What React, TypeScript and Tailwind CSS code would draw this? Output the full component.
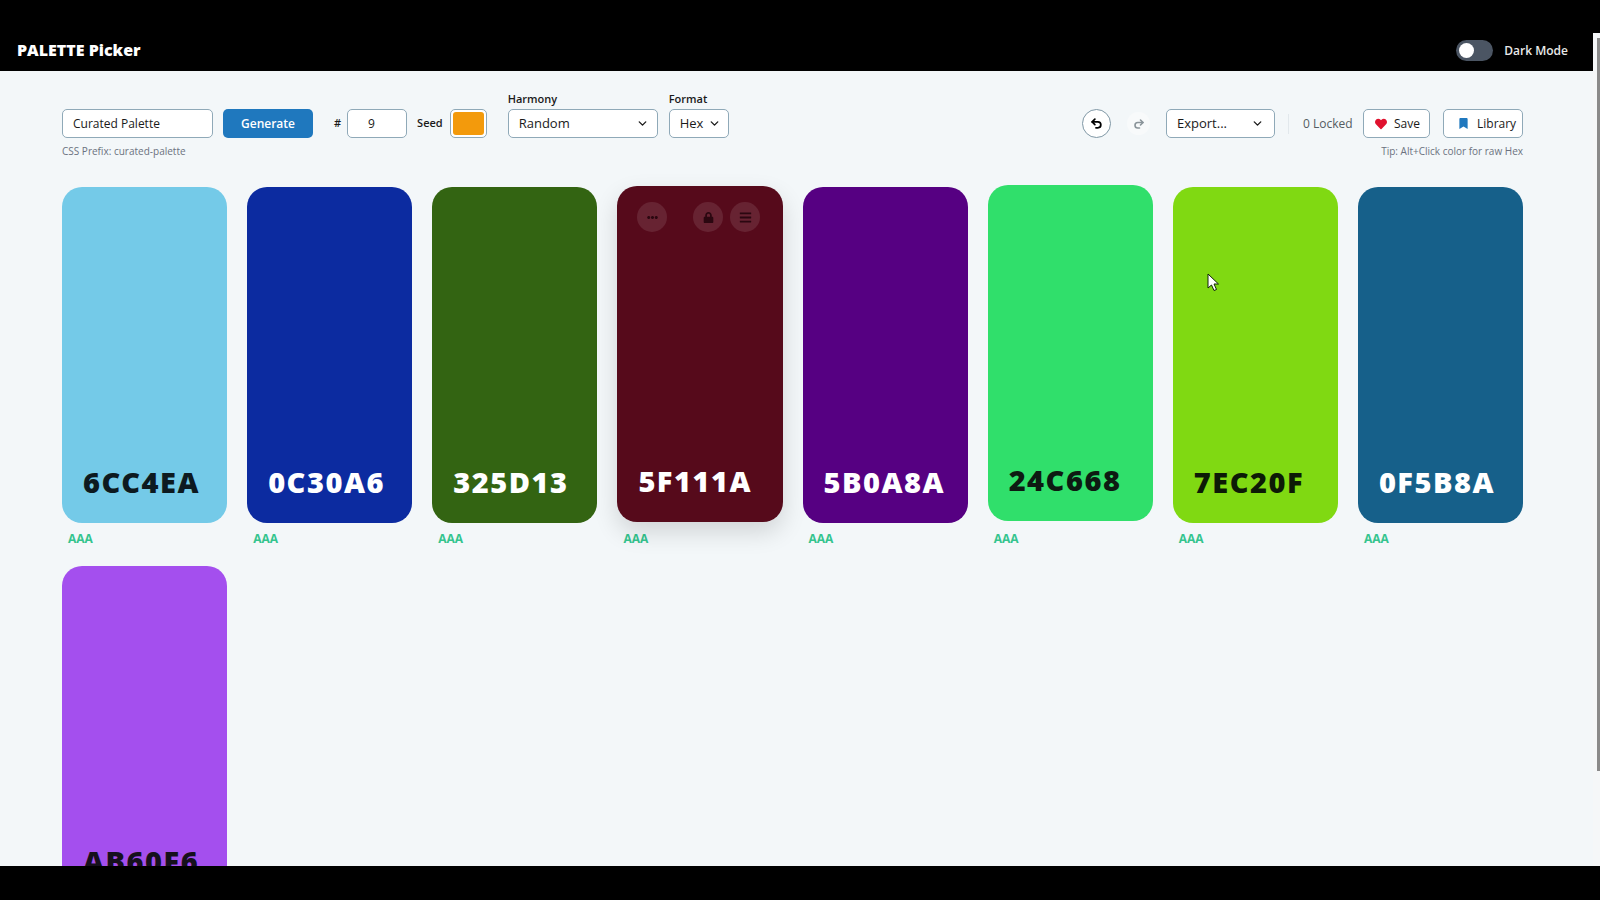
import { ChevronDown, Undo2, Redo2 } from 'lucide-react';
import { FaHeart, FaBookmark, FaLock, FaBars, FaEllipsisH } from 'react-icons/fa';

const swatches = [
  { hex: '6CC4EA', bg: 'bg-[#74cae8]', text: 'text-[#0d1a20]', shift: '' },
  { hex: '0C30A6', bg: 'bg-[#0c2ba0]', text: 'text-white', shift: '' },
  { hex: '325D13', bg: 'bg-[#336412]', text: 'text-white', shift: '' },
  { hex: '5F111A', bg: 'bg-[#560a1b]', text: 'text-white', shift: '-translate-y-px shadow-[0_10px_24px_rgba(0,0,0,0.14)]', hover: true },
  { hex: '5B0A8A', bg: 'bg-[#560082]', text: 'text-white', shift: '' },
  { hex: '24C668', bg: 'bg-[#30df6b]', text: 'text-[#0d1a12]', shift: '-translate-y-[2px]' },
  { hex: '7EC20F', bg: 'bg-[#80d912]', text: 'text-[#0d1a06]', shift: '' },
  { hex: '0F5B8A', bg: 'bg-[#16608a]', text: 'text-white', shift: '' },
  { hex: 'AB60F6', bg: 'bg-[#a44fee]', text: 'text-[#16101c]', shift: '' },
];

const fieldBorder = 'border border-[#8fa9b8] rounded-[5px] bg-white';

function Select({ label, width, padRight }: { label: string; width: string; padRight: string }) {
  return (
    <div className={`${width} ${padRight} ${fieldBorder} h-[29px] pl-[10px] flex items-center justify-between text-[13px] text-[#1a1a1a]`}>
      <span>{label}</span>
      <ChevronDown size={13} strokeWidth={2.5} />
    </div>
  );
}

function Swatch({ s }: { s: (typeof swatches)[number] }) {
  return (
    <div>
      <div className={`${s.bg} ${s.text} ${s.shift} relative h-[336px] rounded-[20px] flex items-end pl-[21px] pb-[27px]`}>
        {s.hover && (
          <>
            <div className="absolute top-[16px] left-[20px] w-[30px] h-[30px] rounded-full bg-white/10 flex items-center justify-center text-[#2b0710]">
              <FaEllipsisH size={11} />
            </div>
            <div className="absolute top-[16px] left-[76px] w-[30px] h-[30px] rounded-full bg-white/10 flex items-center justify-center text-[#2b0710]">
              <FaLock size={11} />
            </div>
            <div className="absolute top-[16px] left-[113px] w-[30px] h-[30px] rounded-full bg-white/10 flex items-center justify-center text-[#2b0710]">
              <FaBars size={13} />
            </div>
          </>
        )}
        <span className="font-['Noto_Sans',sans-serif] font-black text-[29px] leading-none tracking-[1.5px]">{s.hex}</span>
      </div>
      <div className="h-[43px] pl-[6px] pt-[9px] text-[12px] leading-[14px] font-bold text-[#34c48e]">AAA</div>
    </div>
  );
}

export default function App() {
  return (
    <div className="relative h-screen flex flex-col bg-black overflow-hidden font-['Open_Sans',sans-serif]">
      {/* Header */}
      <header className="h-[71px] shrink-0 flex items-end justify-between pl-[17px] pr-[32px] pb-[10px]">
        <h1 className="text-[16px] leading-[22px] font-extrabold text-white">PALETTE Picker</h1>
        <div className="flex items-center gap-[11px]">
          <div className="w-[37px] h-[21px] rounded-full bg-[#4b5563] flex items-center pl-[3px]">
            <div className="w-[15px] h-[15px] rounded-full bg-white" />
          </div>
          <span className="text-[12px] font-semibold text-[#e8e8e8]">Dark Mode</span>
        </div>
      </header>

      {/* Main */}
      <main className="flex-1 min-h-0 overflow-hidden bg-[#f3f7f9] pt-[20px] pl-[62px] pr-[77px]">
        <div className="flex items-end justify-between">
          <div className="flex items-end">
            <input
              readOnly
              value="Curated Palette"
              className={`${fieldBorder} w-[151px] h-[29px] pl-[10px] text-[12px] text-[#1a1a1a] outline-none`}
            />
            <button className="ml-[10px] w-[90px] h-[29px] rounded-[5px] bg-[#1f78be] text-white text-[12px] font-semibold">
              Generate
            </button>
            <span className="ml-[21px] h-[29px] flex items-center text-[11px] font-semibold text-[#1a1a1a]">#</span>
            <input
              readOnly
              value="9"
              className={`${fieldBorder} ml-[6px] w-[60px] h-[29px] pl-[20px] text-[12px] text-[#1a1a1a] outline-none`}
            />
            <span className="ml-[10px] h-[29px] flex items-center text-[11px] font-semibold text-[#1a1a1a]">Seed</span>
            <div className={`${fieldBorder} ml-[7px] w-[37px] h-[29px] p-[2px]`}>
              <div className="w-full h-full rounded-[3px] bg-[#f39a0c]" />
            </div>
            <div className="ml-[21px] flex flex-col">
              <label className="h-[16px] mb-[2px] text-[11px] leading-[16px] font-semibold text-[#1a1a1a]">Harmony</label>
              <Select label="Random" width="w-[150px]" padRight="pr-[8px]" />
            </div>
            <div className="ml-[11px] flex flex-col">
              <label className="h-[16px] mb-[2px] text-[11px] leading-[16px] font-semibold text-[#1a1a1a]">Format</label>
              <Select label="Hex" width="w-[60px]" padRight="pr-[7px]" />
            </div>
          </div>

          <div className="flex items-center">
            <button className="w-[29px] h-[29px] rounded-full border border-[#7f97a5] bg-white flex items-center justify-center text-black">
              <Undo2 size={13} strokeWidth={3.2} />
            </button>
            <button className="ml-[16px] w-[23px] h-[23px] rounded-full bg-[#f8fafb] flex items-center justify-center text-[#8a949a]">
              <Redo2 size={12} strokeWidth={3.2} />
            </button>
            <div className="ml-[16px]">
              <Select label="Export..." width="w-[109px]" padRight="pr-[10px]" />
            </div>
            <div className="ml-[13px] w-px h-[20px] bg-[#e2e8ec]" />
            <span className="ml-[14px] w-[46px] text-[12px] whitespace-nowrap text-[#555c61]">0 Locked</span>
            <button className={`${fieldBorder} ml-[14px] w-[67px] h-[29px] pl-[11px] flex items-center gap-[7px] text-[12px] font-medium text-[#1a1a1a]`}>
              <FaHeart size={12} className="text-[#e0112e]" />
              Save
            </button>
            <button className={`${fieldBorder} ml-[13px] w-[80px] h-[29px] pl-[14px] flex items-center gap-[8px] text-[12px] font-medium text-[#1a1a1a]`}>
              <FaBookmark size={11} className="text-[#1f78be]" />
              Library
            </button>
          </div>
        </div>

        <div className="mt-[6px] h-[14px] flex items-center justify-between text-[10px] text-[#6b7280]">
          <span>CSS Prefix: curated-palette</span>
          <span>Tip: Alt+Click color for raw Hex</span>
        </div>

        {/* Swatches */}
        <div className="mt-[29px] grid grid-cols-8 gap-x-[20px]">
          {swatches.map((s) => (
            <Swatch key={s.hex} s={s} />
          ))}
        </div>
      </main>

      {/* Bottom bar */}
      <div className="h-[34px] shrink-0 bg-black" />

      {/* Scrollbar */}
      <div className="absolute top-[33px] right-0 bottom-[34px] w-[7px] bg-[#f5f7f8] pl-[4px] pt-[5px]">
        <div className="h-[733px] bg-[#8a8a8a]" />
      </div>

      {/* Cursor */}
      <svg className="absolute left-[1207px] top-[273px]" width="13" height="19" viewBox="0 0 13 19">
        <path d="M1 1 L1 15 L4.5 12 L7 17.5 L9.5 16.5 L7 11 L11.5 11 Z" fill="#ffffff" stroke="#10200a" strokeWidth="1" />
      </svg>
    </div>
  );
}
